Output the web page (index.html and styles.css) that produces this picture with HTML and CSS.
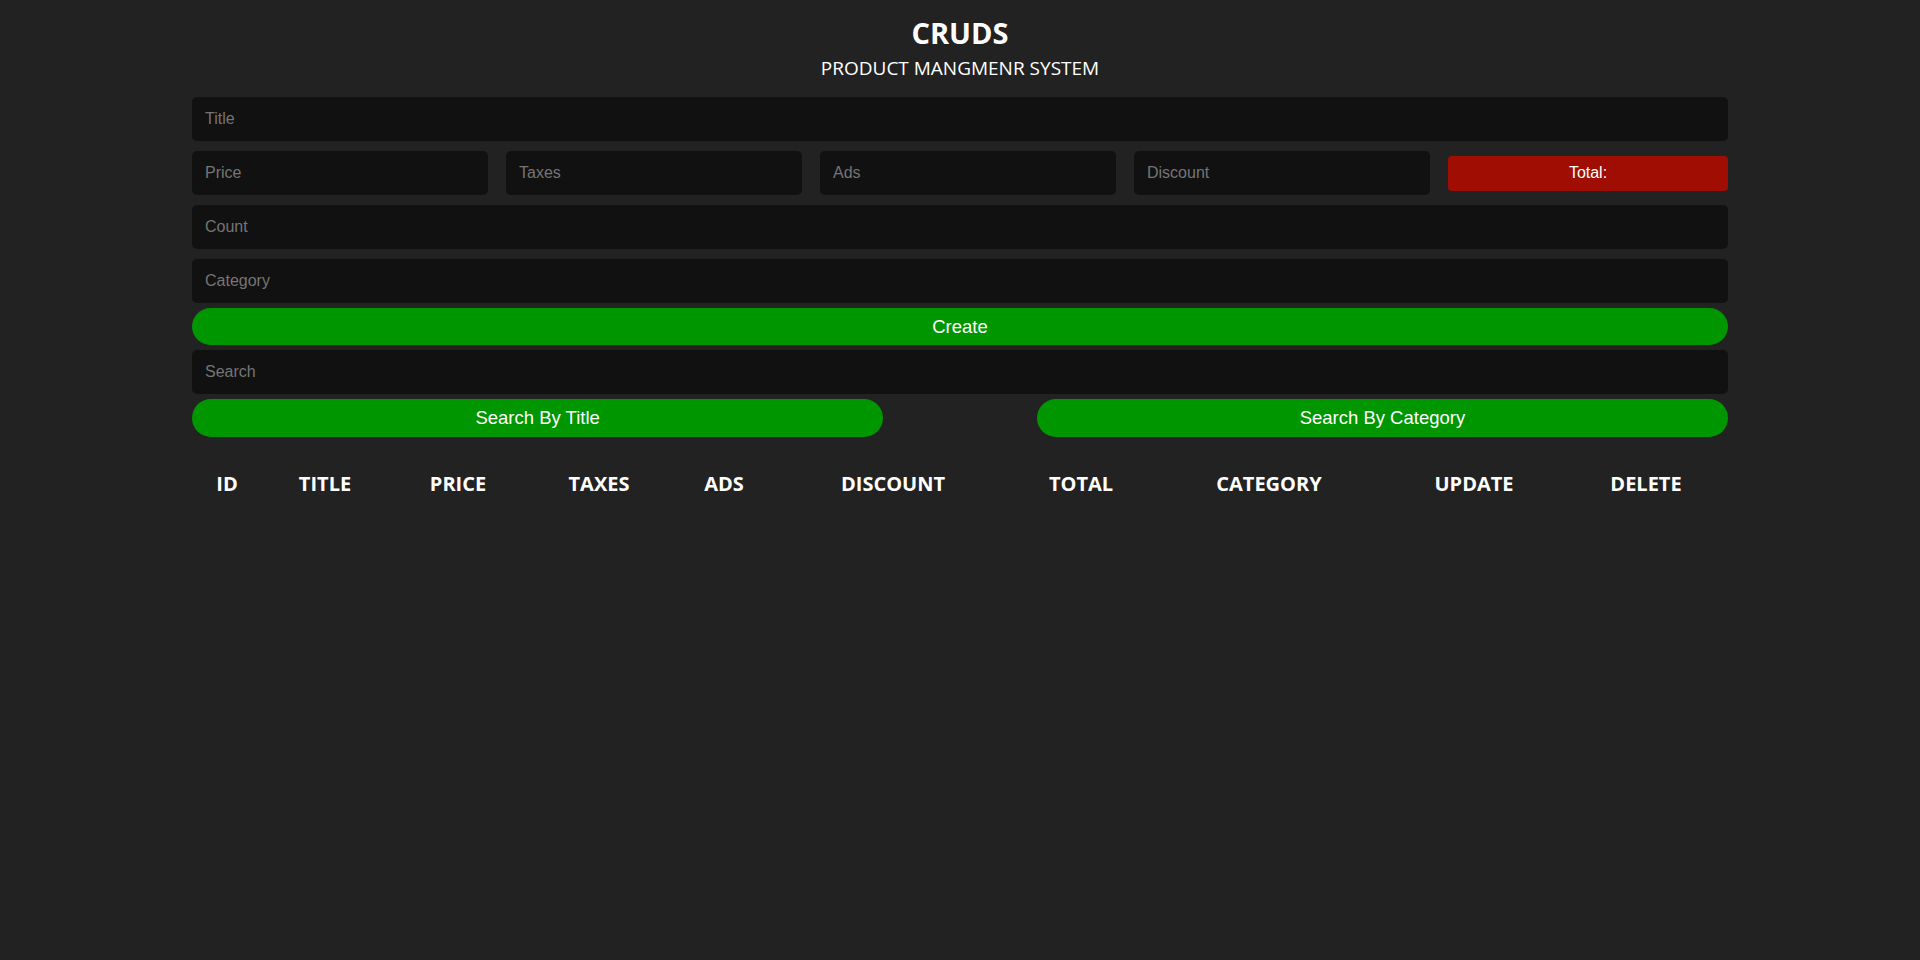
FILE: index.html
```html
<!DOCTYPE html>
<html lang="en">
<head>
<meta charset="UTF-8">
<title>CRUDS</title>
<link rel="stylesheet" href="styles.css">
</head>
<body>
<div class="crud">
  <div class="head">
    <h1 class="title">CRUDS</h1>
    <h2 class="subtitle">PRODUCT MANGMENR SYSTEM</h2>
  </div>
  <div class="inputs">
    <input class="field" type="text" placeholder="Title">
    <div class="price">
      <input class="field price-field" type="number" placeholder="Price">
      <input class="field price-field" type="number" placeholder="Taxes">
      <input class="field price-field" type="number" placeholder="Ads">
      <input class="field price-field" type="number" placeholder="Discount">
      <small class="total">Total:</small>
    </div>
    <input class="field" type="number" placeholder="Count">
    <input class="field" type="text" placeholder="Category">
    <button class="btn btn-create">Create</button>
  </div>
  <div class="output">
    <div class="search-block">
      <input class="field" type="text" placeholder="Search">
      <div class="search-btns">
        <button class="btn btn-search">Search By Title</button>
        <button class="btn btn-search">Search By Category</button>
      </div>
    </div>
    <table class="table">
      <thead>
        <tr>
          <th class="c-id">ID</th>
          <th class="c-title">TITLE</th>
          <th class="c-price">PRICE</th>
          <th class="c-taxes">TAXES</th>
          <th class="c-ads">ADS</th>
          <th class="c-discount">DISCOUNT</th>
          <th class="c-total">TOTAL</th>
          <th class="c-category">CATEGORY</th>
          <th class="c-update">UPDATE</th>
          <th class="c-delete">DELETE</th>
        </tr>
      </thead>
      <tbody></tbody>
    </table>
  </div>
</div>
</body>
</html>
```
FILE: styles.css
```css
* {
  box-sizing: border-box;
}

body {
  margin: 0;
  background: #222222;
  color: #ffffff;
  font-family: "Liberation Sans", Arial, sans-serif;
}

.crud {
  width: 80%;
  margin: 0 auto;
}

.head {
  text-align: center;
  padding-top: 16px;
  font-family: "Open Sans", "Noto Sans", sans-serif;
}

.title {
  margin: 0;
  font-size: 29px;
  line-height: 34px;
  font-weight: 700;
}

.subtitle {
  margin: 6px 0 0;
  font-size: 19px;
  line-height: 24px;
  font-weight: 400;
}

.inputs {
  display: flex;
  flex-direction: column;
  margin-top: 12px;
}

.search-block {
  display: flex;
  flex-direction: column;
}

.field {
  display: block;
  width: 100%;
  height: 44px;
  margin: 5px 0;
  padding: 0 13px;
  border: none;
  outline: none;
  border-radius: 5px;
  background: #111111;
  color: #ffffff;
  font-family: "Liberation Sans", Arial, sans-serif;
  font-size: 16px;
}

.field::placeholder {
  color: #757575;
}

.price {
  display: flex;
  align-items: center;
  gap: 18px;
}

.price-field {
  flex: 0 0 296px;
  width: 296px;
}

.total {
  flex: 1;
  height: 35px;
  display: flex;
  align-items: center;
  justify-content: center;
  background: #a00d02;
  border-radius: 4px;
  font-size: 16px;
  color: #ffffff;
}

.btn {
  display: block;
  height: 37px;
  border: none;
  border-radius: 20px;
  background: #009600;
  color: #ffffff;
  font-family: "Liberation Sans", Arial, sans-serif;
  font-size: 18.5px;
  cursor: pointer;
}

.btn-create {
  width: 100%;
  margin: 0;
}

.search-btns {
  display: flex;
  justify-content: space-between;
}

.btn-search {
  width: 45%;
  height: 38px;
}

.table {
  width: 100%;
  margin-top: 23px;
  border-collapse: collapse;
  table-layout: fixed;
  font-family: "Open Sans", "Noto Sans", sans-serif;
}

.table th {
  padding: 10px 0;
  font-size: 20px;
  font-weight: 700;
  text-align: center;
  text-transform: uppercase;
}

.c-id { width: 70px; }
.c-title { width: 126px; }
.c-price { width: 140px; }
.c-taxes { width: 142px; }
.c-ads { width: 108px; }
.c-discount { width: 230px; }
.c-total { width: 146px; }
.c-category { width: 230px; }
.c-update { width: 180px; }
.c-delete { width: 164px; }
```
